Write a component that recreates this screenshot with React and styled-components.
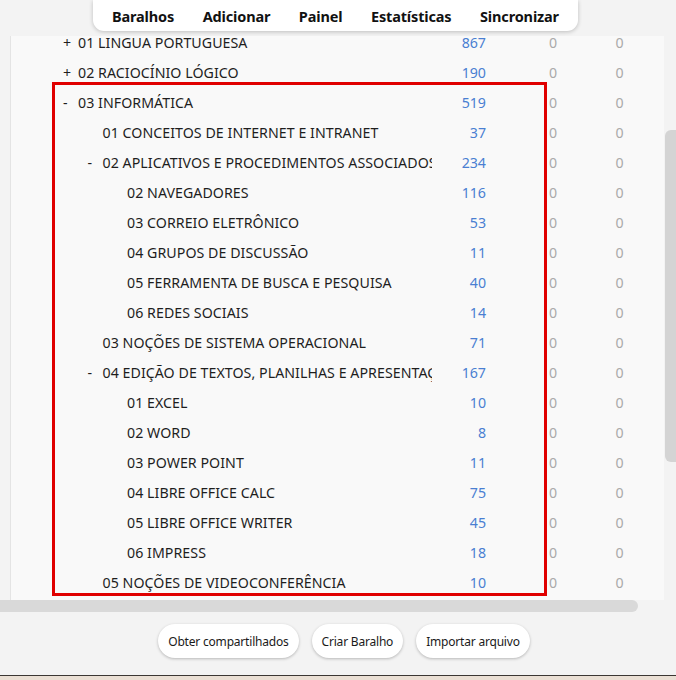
import React from 'react';
import styled, { createGlobalStyle } from 'styled-components';

const GlobalStyle = createGlobalStyle`
  html, body {
    margin: 0;
    padding: 0;
    background: #f3f3f3;
    font-family: 'Noto Sans', 'Open Sans', sans-serif;
    color: #222;
  }
`;

const decks = [
  { level: 0, toggle: '+', name: '01 LINGUA PORTUGUESA', count: 867 },
  { level: 0, toggle: '+', name: '02 RACIOCÍNIO LÓGICO', count: 190 },
];

const highlighted = [
  { level: 0, toggle: '-', name: '03 INFORMÁTICA', count: 519 },
  { level: 1, name: '01 CONCEITOS DE INTERNET E INTRANET', count: 37 },
  { level: 1, toggle: '-', name: '02 APLICATIVOS E PROCEDIMENTOS ASSOCIADOS', count: 234 },
  { level: 2, name: '02 NAVEGADORES', count: 116 },
  { level: 2, name: '03 CORREIO ELETRÔNICO', count: 53 },
  { level: 2, name: '04 GRUPOS DE DISCUSSÃO', count: 11 },
  { level: 2, name: '05 FERRAMENTA DE BUSCA E PESQUISA', count: 40 },
  { level: 2, name: '06 REDES SOCIAIS', count: 14 },
  { level: 1, name: '03 NOÇÕES DE SISTEMA OPERACIONAL', count: 71 },
  { level: 1, toggle: '-', name: '04 EDIÇÃO DE TEXTOS, PLANILHAS E APRESENTAÇÕES', count: 167 },
  { level: 2, name: '01 EXCEL', count: 10 },
  { level: 2, name: '02 WORD', count: 8 },
  { level: 2, name: '03 POWER POINT', count: 11 },
  { level: 2, name: '04 LIBRE OFFICE CALC', count: 75 },
  { level: 2, name: '05 LIBRE OFFICE WRITER', count: 45 },
  { level: 2, name: '06 IMPRESS', count: 18 },
  { level: 1, name: '05 NOÇÕES DE VIDEOCONFERÊNCIA', count: 10 },
];

const Page = styled.div`
  height: 680px;
  display: flex;
  flex-direction: column;
  overflow: hidden;
`;

const TopArea = styled.div`
  height: 36px;
  flex-shrink: 0;
`;

const Toolbar = styled.nav`
  margin-left: 93px;
  width: 485px;
  height: 31px;
  box-sizing: border-box;
  background: #fff;
  border-radius: 0 0 11px 11px;
  box-shadow: 0 1px 4px rgba(0, 0, 0, 0.22);
  display: flex;
  align-items: center;
  justify-content: space-between;
  padding: 0 19px;
`;

const NavItem = styled.span`
  font-weight: 700;
  font-size: 14.5px;
  color: #111;
  letter-spacing: -0.15px;
`;

const Middle = styled.div`
  height: 564px;
  display: flex;
  flex-shrink: 0;
`;

const Panel = styled.div`
  margin-left: 10px;
  width: 653px;
  border-left: 1px solid #e4e4e4;
  background: #f9f9f9;
  overflow: hidden;
`;

// list is scrolled a little, so the first row sits right under the panel edge
const List = styled.div`
  margin-top: -9px;
`;

const Group = styled.div`
  position: relative;

  &::after {
    content: '';
    position: absolute;
    top: -5px;
    left: 41px;
    width: 495px;
    bottom: 1px;
    box-sizing: border-box;
    border: 3px solid #e00000;
    pointer-events: none;
  }
`;

const Row = styled.div`
  height: 30px;
  display: grid;
  grid-template-columns: 372px 54px 100px 67px;
  align-items: center;
  padding-left: 49px;
  font-size: 14.2px;
`;

const NameCell = styled.div`
  display: flex;
  align-items: center;
  padding-left: ${(p) => p.$level * 24.5}px;
  white-space: nowrap;
  overflow: hidden;
  color: #1e1e1e;
  letter-spacing: 0.05px;
`;

const Toggle = styled.span`
  width: 18px;
  flex-shrink: 0;
  padding-left: 3px;
  box-sizing: border-box;
`;

const Count = styled.div`
  text-align: right;
  color: #4a7fd2;
`;

const Zero = styled.div`
  color: #aaaaaa;
  text-align: ${(p) => (p.$first ? 'right' : 'center')};
  padding-right: ${(p) => (p.$first ? '29px' : '0')};
`;

const VTrack = styled.div`
  flex: 1;
`;

const VThumb = styled.div`
  margin-top: 94px;
  margin-left: 1px;
  height: 332px;
  background: #d4d4d4;
  border-radius: 6px 0 0 6px;
`;

const HTrack = styled.div`
  height: 12px;
  flex-shrink: 0;
`;

const HThumb = styled.div`
  width: 638px;
  height: 12px;
  background: #d9d9d9;
  border-radius: 0 6px 6px 0;
`;

const Footer = styled.div`
  height: 63px;
  flex-shrink: 0;
  display: flex;
  justify-content: center;
  align-items: flex-start;
  gap: 13px;
  padding: 12px 0 0 12px;
  box-sizing: border-box;
`;

const ActionButton = styled.button`
  height: 34px;
  padding: 0 10px;
  border: none;
  border-radius: 17px;
  background: #fff;
  box-shadow: 0 1px 3px rgba(0, 0, 0, 0.25);
  font-family: 'Noto Sans', 'Open Sans', sans-serif;
  font-size: 12px;
  letter-spacing: -0.2px;
  color: #1a1a1a;
  cursor: pointer;
`;

const Desktop = styled.div`
  flex: 1;
  border-top: 1px solid #3b3633;
  background: #eadfd4;
`;

function DeckRow({ deck }) {
  return (
    <Row>
      <NameCell $level={deck.level}>
        <Toggle>{deck.toggle || ''}</Toggle>
        {deck.name}
      </NameCell>
      <Count>{deck.count}</Count>
      <Zero $first>0</Zero>
      <Zero>0</Zero>
    </Row>
  );
}

export default function App() {
  return (
    <>
      <GlobalStyle />
      <Page>
        <TopArea>
          <Toolbar>
            <NavItem>Baralhos</NavItem>
            <NavItem>Adicionar</NavItem>
            <NavItem>Painel</NavItem>
            <NavItem>Estatísticas</NavItem>
            <NavItem>Sincronizar</NavItem>
          </Toolbar>
        </TopArea>
        <Middle>
          <Panel>
            <List>
              {decks.map((d) => (
                <DeckRow key={d.name} deck={d} />
              ))}
              <Group>
                {highlighted.map((d) => (
                  <DeckRow key={d.name} deck={d} />
                ))}
              </Group>
            </List>
          </Panel>
          <VTrack>
            <VThumb />
          </VTrack>
        </Middle>
        <HTrack>
          <HThumb />
        </HTrack>
        <Footer>
          <ActionButton>Obter compartilhados</ActionButton>
          <ActionButton>Criar Baralho</ActionButton>
          <ActionButton>Importar arquivo</ActionButton>
        </Footer>
        <Desktop />
      </Page>
    </>
  );
}
